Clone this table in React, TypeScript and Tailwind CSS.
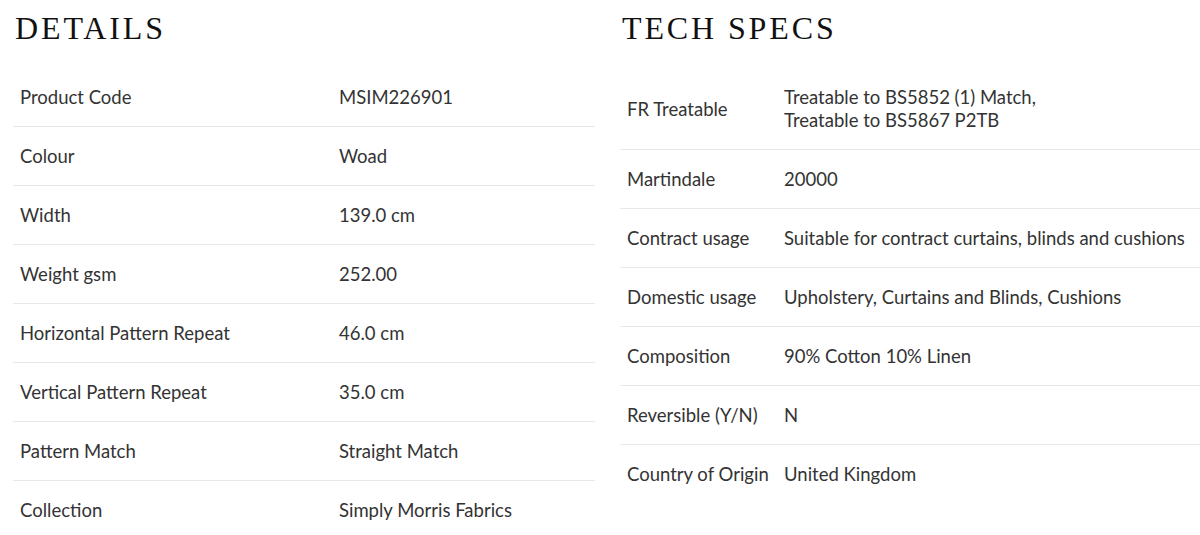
import React from 'react';

type Row = { label: string; value: React.ReactNode };

const details: Row[] = [
  { label: 'Product Code', value: 'MSIM226901' },
  { label: 'Colour', value: 'Woad' },
  { label: 'Width', value: '139.0 cm' },
  { label: 'Weight gsm', value: '252.00' },
  { label: 'Horizontal Pattern Repeat', value: '46.0 cm' },
  { label: 'Vertical Pattern Repeat', value: '35.0 cm' },
  { label: 'Pattern Match', value: 'Straight Match' },
  { label: 'Collection', value: 'Simply Morris Fabrics' },
];

const specs: Row[] = [
  {
    label: 'FR Treatable',
    value: (
      <>
        Treatable to BS5852 (1) Match,
        <br />
        Treatable to BS5867 P2TB
      </>
    ),
  },
  { label: 'Martindale', value: '20000' },
  { label: 'Contract usage', value: 'Suitable for contract curtains, blinds and cushions' },
  { label: 'Domestic usage', value: 'Upholstery, Curtains and Blinds, Cushions' },
  { label: 'Composition', value: '90% Cotton 10% Linen' },
  { label: 'Reversible (Y/N)', value: 'N' },
  { label: 'Country of Origin', value: 'United Kingdom' },
];

function Heading({ children }: { children: React.ReactNode }) {
  return (
    <h2 className="mt-[8px] mb-[20px] h-[40px] text-[32px] leading-[40px] font-normal tracking-[0.09em] text-[#111] [font-family:'Liberation_Serif',serif]">
      {children}
    </h2>
  );
}

function SpecTable({ rows, labelWidth }: { rows: Row[]; labelWidth: string }) {
  return (
    <div>
      {rows.map((r, i) => (
        <div
          key={r.label}
          className={`flex items-center pt-[18px] pb-[17px] text-[18.5px] leading-[23px] text-[#333] ${
            i < rows.length - 1 ? 'border-b border-[#e8e8e8]' : ''
          }`}
        >
          <div className={`${labelWidth} shrink-0 pl-[7px]`}>{r.label}</div>
          <div>{r.value}</div>
        </div>
      ))}
    </div>
  );
}

export default function App() {
  return (
    <div className="w-[1200px] h-[535px] bg-white overflow-hidden [font-family:Lato,'Noto_Sans',sans-serif]">
      <div className="flex">
        <section className="ml-[13px] w-[582px]">
          <div className="pl-[2px]">
            <Heading>DETAILS</Heading>
          </div>
          <SpecTable rows={details} labelWidth="w-[326px]" />
        </section>
        <section className="ml-[25px] w-[580px]">
          <div className="pl-[2px]">
            <Heading>TECH SPECS</Heading>
          </div>
          <SpecTable rows={specs} labelWidth="w-[164px]" />
        </section>
      </div>
    </div>
  );
}
